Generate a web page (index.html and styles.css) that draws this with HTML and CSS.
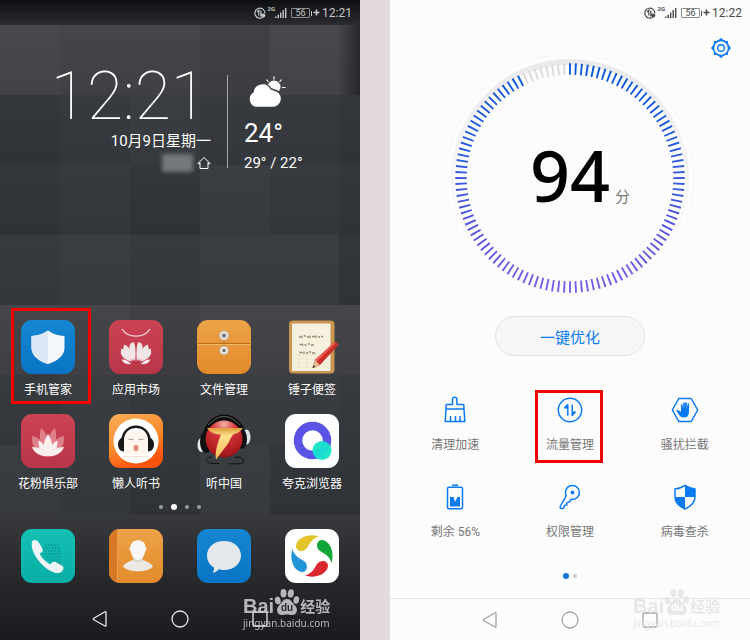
FILE: index.html
```html
<!DOCTYPE html>
<html lang="zh-CN">
<head>
<meta charset="utf-8">
<meta name="viewport" content="width=device-width, initial-scale=1">
<title>手机管家 流量管理</title>
<link rel="stylesheet" href="styles.css">
</head>
<body>
<svg class="defs" aria-hidden="true">
  <defs>
    <linearGradient id="blue" x2="0" y2="1"><stop offset="0" stop-color="#1687d3"/><stop offset="1" stop-color="#0774c4"/></linearGradient>
    <linearGradient id="red" x2="0" y2="1"><stop offset="0" stop-color="#cb4455"/><stop offset="1" stop-color="#b93548"/></linearGradient>
    <linearGradient id="amber" x2="0" y2="1"><stop offset="0" stop-color="#eda247"/><stop offset="1" stop-color="#e28b2b"/></linearGradient>
    <linearGradient id="teal" x2="0" y2="1"><stop offset="0" stop-color="#14bfb4"/><stop offset="1" stop-color="#08aea5"/></linearGradient>
    <linearGradient id="fire" x2="0.4" y2="1"><stop offset="0" stop-color="#f8b05c"/><stop offset="0.6" stop-color="#fb8a2c"/><stop offset="1" stop-color="#f9540a"/></linearGradient>
    <linearGradient id="gold" x2="0" y2="1"><stop offset="0" stop-color="#e09a3a"/><stop offset="0.25" stop-color="#ffdf8c"/><stop offset="1" stop-color="#f5bd55"/></linearGradient>
    <radialGradient id="ball" cx="0.5" cy="0.1" r="0.9"><stop offset="0" stop-color="#f4b0a8"/><stop offset="0.35" stop-color="#d8363a"/><stop offset="1" stop-color="#9c1218"/></radialGradient>
    <linearGradient id="ticks" gradientUnits="userSpaceOnUse" x1="0" y1="8" x2="0" y2="250"><stop offset="0" stop-color="#0557d6"/><stop offset="0.4" stop-color="#2c5cdd"/><stop offset="0.7" stop-color="#5454dd"/><stop offset="1" stop-color="#7d63e6"/></linearGradient>
    <linearGradient id="halo" x2="0" y2="1"><stop offset="0" stop-color="#e9e9eb"/><stop offset="0.35" stop-color="#f3f3f6"/><stop offset="0.8" stop-color="#fbfbfc"/></linearGradient>
    <linearGradient id="rows" x2="0" y2="1"><stop offset="0" stop-color="#373a3e"/><stop offset="1" stop-color="#33363a"/></linearGradient>
    <linearGradient id="rowtop" x2="0" y2="1"><stop offset="0" stop-color="#44464a"/><stop offset="1" stop-color="#3e4044"/></linearGradient>
    <linearGradient id="bar" x2="0" y2="1"><stop offset="0" stop-color="#0e0f11"/><stop offset="0.6" stop-color="#1f2124"/><stop offset="1" stop-color="#2b2d31"/></linearGradient>
    <linearGradient id="dockshade" x2="0" y2="1"><stop offset="0" stop-color="#37393d"/><stop offset="0.35" stop-color="#2b2d31"/><stop offset="1" stop-color="#191b1e"/></linearGradient>
    <linearGradient id="edge"><stop offset="0" stop-color="#26282b" stop-opacity="0"/><stop offset="1" stop-color="#26282b"/></linearGradient>
  </defs>
  <symbol id="data" viewBox="0 0 12 12"><g fill="none" stroke="currentColor" stroke-width="1.2"><path d="M9 10.1A5 5 0 1 1 10.9 6.4"/><path d="M3.2 5 4.8 3.300V8.600M6.800 3.400V8.500L8.400 7"/></g><circle cx="9.300" cy="8.600" r="2" fill="currentColor"/></symbol>
  <symbol id="signal" viewBox="0 0 12 13"><path fill="currentColor" d="M0 10.500h1.500V12H0zM2.500 8.700H4V12H2.500zM5 6.500h1.400V12H5zM7.500 4h1.400v8H7.500zM10 2h1.400v10H10z"/></symbol>
  <symbol id="plus" viewBox="0 0 7 7"><path fill="currentColor" d="M2.700.5h1.600v2.200h2.200v1.600H4.300v2.200H2.700V4.300H.5V2.700h2.200z"/></symbol>
  <symbol id="back" viewBox="0 0 16 18"><path d="M14 2.500V15.500Q14 16.600 13 16L1.800 9.700Q.8 9 1.800 8.300L13 1.800Q14 1.300 14 2.500Z" fill="none" stroke="currentColor" stroke-width="1.300"/></symbol>
  <symbol id="home" viewBox="0 0 18 18"><circle cx="9" cy="9" r="8" fill="none" stroke="currentColor" stroke-width="1.300"/></symbol>
  <symbol id="recent" viewBox="0 0 16 16"><rect x="1" y="1" width="14" height="14" rx="1.500" fill="none" stroke="currentColor" stroke-width="1.300"/></symbol>
  <symbol id="paw" viewBox="0 0 26 29"><g fill="currentColor"><ellipse cx="3.800" cy="12.500" rx="2.900" ry="3.800" transform="rotate(-12 3.800 12.500)"/><ellipse cx="9.500" cy="5.200" rx="3" ry="4.200"/><ellipse cx="16.800" cy="5.400" rx="3" ry="4.200" transform="rotate(10 16.800 5.400)"/><ellipse cx="22.300" cy="12" rx="2.800" ry="3.800" transform="rotate(12 22.300 12)"/><path d="M13 11c4 0 5 3.500 8 6.500 3.500 3.600 2 9.500-2.700 9.500-2.300 0-3.300-.6-5.300-.6s-3 .6-5.300.6C3 27 1.500 21.100 5 17.500 8 14.500 9 11 13 11z"/></g></symbol>
</svg>

<main class="board">
  <section class="phone launcher" aria-label="桌面">
    <svg class="wallpaper" viewBox="0 0 360 640" preserveAspectRatio="none" aria-hidden="true">
      <rect width="360" height="26" fill="url(#bar)"/>
      <rect y="25" width="360" height="70" fill="url(#rowtop)"/>
      <rect y="95" width="360" height="70" fill="url(#rows)"/>
      <rect y="165" width="360" height="70" fill="url(#rows)"/>
      <rect y="235" width="360" height="71" fill="url(#rows)"/>
      <rect y="305" width="360" height="71" fill="url(#rowtop)"/>
      <rect y="375" width="360" height="71" fill="url(#rows)"/>
      <rect y="445" width="360" height="71" fill="url(#rows)"/>
      <rect y="515" width="360" height="125" fill="url(#dockshade)"/>
      <g fill="#fff" opacity=".02"><path d="M0 25h60v70H0zM130 95h70v70h-70zM200 165h70v70h-70zM200 235h70v70h-70zM270 235h69v70h-69zM60 235h70v70H60zM60 375h70v70H60zM200 375h70v140h-70zM0 445h60v70H0zM270 375h69v70h-69zM270 25h69v70h-69z"/></g>
      <g fill="#000" opacity=".06"><path d="M0 95h60v70H0zM130 165h70v70h-70zM200 25h70v70h-70zM0 165h60v70H0zM270 445h90v70h-90zM130 305h70v70h-70zM339 95h21v210h-21zM130 445h70v70h-70z"/></g>
      <rect x="339" y="25" width="21" height="70" fill="url(#edge)"/>
    </svg>

    <header class="status">
      <svg width="12" height="12"><use href="#data"/></svg>
      <span class="net">2G</span>
      <svg width="12" height="13"><use href="#signal"/></svg>
      <span class="battery">56</span>
      <svg class="plus" width="7" height="7"><use href="#plus"/></svg>
      <time>12:21</time>
    </header>

    <div class="widget">
      <div class="when">
        <time class="clock">12:21</time>
        <div class="date">10月9日星期一</div>
        <div class="place"><span class="masked"></span>
          <svg width="14" height="14" viewBox="0 0 14 14"><path d="M3 6.500V12.500H11V6.500M.8 7.600 7 1.500l6.200 6.100H11M3 7.600H.8" fill="none" stroke="#fff"/></svg>
        </div>
      </div>
      <div class="weather">
        <svg width="42" height="34" viewBox="0 0 42 34">
          <circle cx="30" cy="12" r="6.500" fill="#fff"/>
          <path d="M30 1.500v3M22.500 4.500l2 2.500M37.500 4.500l-2 2.500M38 12.500h3.500" stroke="#fff" stroke-width="1.200"/>
          <path d="M12 32.500a8.500 8.500 0 0 1-3-15.500 9.500 9.500 0 0 1 18-3 6 6 0 0 1 3 1 8.800 8.800 0 0 1-1 17.500z" fill="#fff" stroke="#3b3d41" stroke-width="1.400"/>
        </svg>
        <strong>24°</strong>
        <span>29° / 22°</span>
      </div>
    </div>

    <nav class="apps" aria-label="应用">
      <a class="app marked" href="#"><svg viewBox="0 0 54 54"><rect width="54" height="54" rx="11" fill="url(#blue)"/><path d="M27 10.500c5 3.500 10 5 16.500 5.500v12c0 8-8 13.500-16.500 16-8.500-2.500-16.500-8-16.500-16V16C17 15.500 22 14 27 10.500z" fill="#f4f8fc"/><path d="M27 10.500c-5 3.500-10 5-16.500 5.500v12c0 8 8 13.500 16.500 16z" fill="#dbe8f5"/></svg><span>手机管家</span></a>
      <a class="app" href="#"><svg viewBox="0 0 54 54"><rect width="54" height="54" rx="11" fill="url(#red)"/><path d="M13 9c6 9.500 22 9.500 28 0" fill="none" stroke="#f5d9dc" stroke-width="1.300"/><g fill="#f3e6e6"><path d="M26.300 41C20 33 17.500 24 24.500 22c2.500 3 2.200 13 1.800 19z"/><path d="M25 41c-8-4-13-11-9.500-16.500 5 2 8.500 9.500 9.500 16.500z"/><path d="M23 41.500c-9-1.500-13-7.500-10.500-13C17.500 30 21 35 23 41.500z"/><path d="M22 44c-4 1-8-.5-9.500-4.500 4-.5 7.500 1.500 9.500 4.500z"/><path d="M27.700 41C34 33 36.500 24 29.500 22c-2.500 3-2.200 13-1.800 19z"/><path d="M29 41c8-4 13-11 9.500-16.500-5 2-8.500 9.500-9.500 16.500z"/><path d="M31 41.500c9-1.500 13-7.500 10.500-13C36.500 30 33 35 31 41.500z"/><path d="M32 44c4 1 8-.5 9.500-4.500-4-.5-7.500 1.500-9.500 4.500z"/></g></svg><span>应用市场</span></a>
      <a class="app" href="#"><svg viewBox="0 0 54 54"><rect width="54" height="54" rx="11" fill="url(#amber)"/><path d="M1 23.500h52" stroke="#b96d1b"/><path d="M1 24.500h52" stroke="#f3b568"/><path d="M27 17v13" stroke="#b77d3a"/><g fill="#e8e4de" stroke="#b99c78" stroke-width=".7"><circle cx="27" cy="15.500" r="4.800"/><circle cx="27" cy="30.500" r="4.500"/></g><g fill="#6d7176"><circle cx="27" cy="15.500" r="1.900"/><circle cx="27" cy="30.500" r="1.700"/></g></svg><span>文件管理</span></a>
      <a class="app" href="#"><svg viewBox="0 0 54 54"><rect x="4" y=".5" width="45.500" height="53" rx="4" fill="#c9954f"/><path d="M7 3.500h38.500V51H7z" fill="#f6f0df"/><path d="M8 35h37M8 39h37M8 43h37M8 47h37M14 30v20M22 30v20M31 30v20" stroke="#e6dcc3" stroke-width=".6"/><path d="M14 17h2M17 15.500v2.500M19 16h2M22 17h2M25 15.500v2.500M27 16.500h3M31 15.500v2.500M33 17h2M36 16.500h2M14.500 24.500h2M17.500 23.500v2.500M19.500 25h2M23 24h2M26 25h3M14.500 32.500h3M19 31.500V34M21 33h2M24 32h2M27 33h3" stroke="#96866f" stroke-width="1.300"/><path d="m27.500 48 2.500-8L49 22.500q3-1.500 4.500 2.500L35 45z" fill="#c92f2b"/><path d="M30 40 49 22.500l2 .5L32 41.500z" fill="#ed5a50"/><path d="m27.500 48 2.500-8 5 5z" fill="#e5bd88"/><path d="m27.500 48 .9-3 2 2z" fill="#333"/></svg><span>锤子便签</span></a>
      <a class="app" href="#"><svg viewBox="0 0 54 54"><rect width="54" height="54" rx="11" fill="url(#red)"/><g fill="#df7d88"><path d="M27 43c-7-6-10-18-7-29 6 4 9 15 7 29zM27 43c7-6 10-18 7-29-6 4-9 15-7 29zM27 43C17 42 10 33 11 22c9 1 15 10 16 21zM27 43c10-1 17-10 16-21-9 1-15 10-16 21z"/></g><g fill="#fbeeee"><path d="M27 20c5 7 6 15 0 22-6-7-5-15 0-22z"/><path d="M27 42c-7-2-10-8-9.500-15.500C23 29 26.500 35 27 42zM27 42c7-2 10-8 9.500-15.500C31 29 27.500 35 27 42z"/><path d="M27 42c-7 1-14-3-16-9 7 0 13 3 16 9zM27 42c7 1 14-3 16-9-7 0-13 3-16 9z"/></g></svg><span>花粉俱乐部</span></a>
      <a class="app" href="#"><svg viewBox="0 0 54 54"><rect width="54" height="54" rx="11" fill="url(#fire)"/><circle cx="27" cy="27" r="22.500" fill="#fff"/><path d="M15 41V27c0-15 24-15 24 0v14z" fill="#fdf6ee"/><path d="M13.500 27c0-19 27-19 27 0" fill="none" stroke="#171717" stroke-width="2.500"/><path d="M15 23.500v14c-8 0-8-14 0-14zM39 23.500v14c8 0 8-14 0-14z" fill="#171717"/><path d="M19.500 25q2.500 1.500 5 0M29.500 25q2.500 1.500 5 0" stroke="#8b7060" stroke-width=".8" fill="none"/><ellipse cx="27" cy="34" rx="2.500" ry="3.300" fill="#e98c79"/><path d="M14 42.500h26" stroke="#f4d8c2" stroke-width=".7"/></svg><span>懒人听书</span></a>
      <a class="app" href="#"><svg viewBox="0 0 54 54"><path d="M9 20C15-2 39-2 46 20" fill="none" stroke="#0b0b0c" stroke-width="6"/><path d="M11 11Q27-6 43 11" fill="none" stroke="#777b80" stroke-width=".8"/><ellipse cx="4.500" cy="31" rx="4" ry="7" fill="#e5e8ec"/><ellipse cx="49.500" cy="23" rx="4" ry="7.500" fill="#dfe4ea"/><ellipse cx="9" cy="28" rx="6" ry="11" fill="#111"/><ellipse cx="45" cy="25" rx="5" ry="10" fill="#111"/><circle cx="27" cy="25" r="18.500" fill="url(#ball)"/><path d="M10 14H46Q42 19.500 37 20C34 22 33 27 30 31L19 45.500C17.500 38 21 28 24 20.500 18 20.500 13 18.500 10 14z" fill="url(#gold)"/><path d="M15 43c-7 0-8 5 0 6.500h7M38 44c4-3 9 1 9 4-4 3-9 1-15 2" fill="none" stroke="#0b0b0c" stroke-width=".9"/></svg><span>听中国</span></a>
      <a class="app" href="#"><svg viewBox="0 0 54 54"><rect width="54" height="54" rx="11" fill="#fff"/><circle cx="27.500" cy="26.500" r="14.500" fill="none" stroke="#5a53e6" stroke-width="8.500"/><circle cx="37" cy="36.500" r="9.500" fill="#1de5c8"/><path d="M27.500 36.700A10.200 10.200 0 0 0 37.700 27q4 1 6.500 3.500-1 9-8.500 13.500-7-1-8.200-7.300z" fill="#19cfd5" opacity=".5"/></svg><span>夸克浏览器</span></a>
    </nav>
    <div class="pages"><i></i><i class="on"></i><i></i><i></i></div>
    <nav class="dock" aria-label="快捷栏">
      <a href="#" aria-label="电话"><svg viewBox="0 0 54 54"><rect width="54" height="54" rx="11" fill="url(#teal)"/><path d="M24 16h14M22 19h18M24 22h16M24 25h16M26 28h14M28 31h12M32 34h8" stroke="#078f89" stroke-width="1.300" stroke-dasharray="1.300 1.700"/><path d="M12 11.500c3-1.500 5 .5 6.500 3l3 5.500c1 2-.5 3.500-3 4.500 2.500 5 6.500 8.500 11 11 1-2 3-3.500 5-2.500l6.500 3.500c3 2 1 6.500-3 7.500C27 45.500 10 26.500 10.700 15c.1-1.700.3-2.900 1.300-3.500z" fill="#f1f4f4"/></svg></a>
      <a href="#" aria-label="联系人"><svg viewBox="0 0 54 54"><rect width="54" height="54" rx="11" fill="url(#amber)"/><path d="M9 0h2a11 11 0 0 0-11 11v32a11 11 0 0 0 9 10.800z" fill="#d97824"/><path d="M8.500 1v52" stroke="#f2b668" stroke-width=".7"/><path d="M14 37.500c2-4 8-5.500 11-7h8c3 1.500 9 3 11 7-6 6.500-24 6.500-30 0z" fill="#ece9e4"/><path d="M24.500 28h9v4q-4.500 3-9 0z" fill="#ddd7ce"/><path d="M21.500 18c0-9 15-9 15 0 1.500.5 1 4-.5 4.500-.5 5-3.500 8.500-7 8.500s-6.500-3.500-7-8.500c-1.500-.5-2-4-.5-4.500z" fill="#f7f6f4"/></svg></a>
      <a href="#" aria-label="信息"><svg viewBox="0 0 54 54"><rect width="54" height="54" rx="11" fill="url(#blue)"/><path d="M27 12c9.500 0 17 6 17 14.500S36.500 41 27 41c-2 0-3.500-.2-5-.7-2 2-4 3.300-6.500 3.700 1.200-1.500 1.700-3.500 1.500-5.500-4.500-2.500-7-7-7-12C10 18 17.500 12 27 12z" fill="#e4e8eb"/></svg></a>
      <a href="#" aria-label="浏览器"><svg viewBox="0 0 54 54"><rect width="54" height="54" rx="11" fill="#fff"/><path d="M34 7.500C24 4 11.500 9 11 17c0 6 8 6.500 11 2 3-5 5-9.500 12-11.500z" fill="#e2c428"/><path d="M34 7.500C24 4 11.500 9 11 17c0 6 8 6.500 11 2 3-5 5-9.500 12-11.500z" fill="#14a538" transform="rotate(90 27 27)"/><path d="M34 7.500C24 4 11.500 9 11 17c0 6 8 6.500 11 2 3-5 5-9.500 12-11.500z" fill="#d9292e" transform="rotate(180 27 27)"/><path d="M34 7.500C24 4 11.500 9 11 17c0 6 8 6.500 11 2 3-5 5-9.500 12-11.500z" fill="#2494d8" transform="rotate(270 27 27)"/></svg></a>
    </nav>
    <nav class="keys" aria-label="导航键">
      <button type="button" aria-label="返回"><svg width="16" height="18"><use href="#back"/></svg></button>
      <button type="button" aria-label="主页"><svg width="18" height="18"><use href="#home"/></svg></button>
      <button type="button" aria-label="最近"><svg width="16" height="16"><use href="#recent"/></svg></button>
    </nav>
    <div class="brand"><div class="brand-top"><b>Bai</b><span class="paw"><svg width="26" height="29"><use href="#paw"/></svg><i>du</i></span><b class="cn">经验</b></div><div class="site">jingyan.baidu.com</div></div>
  </section>

  <section class="phone manager" aria-label="手机管家">
    <header class="status">
      <svg width="12" height="12"><use href="#data"/></svg>
      <span class="net">2G</span>
      <svg width="12" height="13"><use href="#signal"/></svg>
      <span class="battery">56</span>
      <svg class="plus" width="7" height="7"><use href="#plus"/></svg>
      <time>12:22</time>
    </header>
    <div class="toolbar"><button type="button" aria-label="设置"><svg width="22" height="22" viewBox="0 0 22 22"><g fill="none" stroke="#0a7af0"><circle cx="11" cy="11" r="7.600" stroke-width="1.600"/><circle cx="11" cy="11" r="3.300" stroke-width="1.400"/></g><path d="M9.500 3 11 1.300 12.500 3zM9.500 19l1.500 1.700 1.500-1.700zM3 9.500 1.300 11 3 12.500zM19 9.500l1.700 1.500-1.700 1.500zM4.600 6.100l-.3-1.800 1.800.3zM17.400 6.100l.3-1.800-1.800.3zM4.600 15.900l-.3 1.800 1.800-.3zM17.400 15.900l.3 1.800-1.800-.3z" fill="#0a7af0" stroke="#0a7af0" stroke-linejoin="round"/></svg></button></div>
    <div class="dial">
      <svg viewBox="0 0 256 256" aria-hidden="true">
        <circle cx="128" cy="128" r="124" fill="#fdfdfd" stroke="#f8f8f9"/>
        <circle cx="128" cy="128" r="119" fill="url(#halo)"/>
        <circle cx="128" cy="131" r="116" fill="#fcfcfd"/>
        <path d="M127.050 19A109 109 0 1 1 82.790 28.820" pathLength="112" fill="none" stroke="url(#ticks)" stroke-width="11.500" stroke-dasharray=".33 .67"/>
        <path d="M82.790 28.820A109 109 0 0 1 127.050 19" pathLength="8" fill="none" stroke="#d8d8d9" stroke-width="11.500" stroke-dasharray=".3 .7"/>
      </svg>
      <div class="score"><strong>94</strong><span>分</span></div>
    </div>
    <button class="optimize" type="button">一键优化</button>
    <nav class="tools" aria-label="工具">
      <a class="tool" href="#"><svg viewBox="0 0 28 28"><path d="M5 13V9.500q0-1 1-1h5.500V3.500a2.200 2.200 0 0 1 4.400 0v5h6q1 0 1 1V13zM5 13 4.200 25.500h19.600L23 13M9.500 25.500V20M14.500 25.500V20M19 25.500V20"/></svg><span>清理加速</span></a>
      <a class="tool marked" href="#"><svg viewBox="0 0 28 28"><circle cx="14" cy="14" r="11.700"/><path d="M8.300 12.300 11.800 8.500V19.800M16.200 8.500V19.500L19.500 15.700"/><path class="solid" d="m8.300 12.500 3.500-4v4zM16 15.500h3.700l-3.700 4z"/></svg><span>流量管理</span></a>
      <a class="tool" href="#"><svg viewBox="0 0 28 28"><path d="M7.800 2.500h12.400L26.700 14l-6.500 11.500H7.800L1.300 14z"/><path class="solid" d="M9.900 8.500q.9-.8 1.500.2l.8 4.300V7q.8-1.200 1.700 0v5.500l.3-6q.8-1 1.600 0v6.300l.8-5q.8-1 1.500.2l-.2 9c-.5 3-2 4.500-5 4.500s-4-1.500-5.500-3.500l-2-3c0-1.500 1.700-1.500 3.700.5l1-.3z"/></svg><span>骚扰拦截</span></a>
      <a class="tool" href="#"><svg viewBox="0 0 28 28"><rect x="6.500" y="4.200" width="15" height="21.500" rx="1.500"/><path d="M11 2.200h6"/><path class="solid" d="M9 14h3.500l1.500 5 2.500-5H19v9.500H9z"/></svg><span>剩余 56%</span></a>
      <a class="tool" href="#"><svg viewBox="0 0 28 28"><path d="M10.200 12.700A7 7 0 1 1 16 16.500L14.800 16.300l-1 2.500-2.800.8-.3 2.300-2.200.5-.8 2.300q-.8 1-2.200.8-1.800-.2-1.300-2z"/><circle class="solid" cx="16.500" cy="9.500" r="2"/></svg><span>权限管理</span></a>
      <a class="tool" href="#"><svg viewBox="0 0 28 28"><path d="M14 2.500q5 3 10 3.500v8c0 6-4.500 9.500-10 12-5.500-2.500-10-6-10-12V6q5-.5 10-3.500z"/><path class="solid" d="M14 2.500q5 3 10 3.500v8H14zM14 14v12C8.500 23.500 4 20 4 14z"/></svg><span>病毒查杀</span></a>
    </nav>
    <div class="pages"><i class="on"></i><i></i></div>
    <nav class="keys" aria-label="导航键">
      <button type="button" aria-label="返回"><svg width="16" height="18"><use href="#back"/></svg></button>
      <button type="button" aria-label="主页"><svg width="18" height="18"><use href="#home"/></svg></button>
      <button type="button" aria-label="最近"><svg width="16" height="16"><use href="#recent"/></svg></button>
    </nav>
    <div class="brand"><div class="brand-top"><b>Bai</b><span class="paw"><svg width="26" height="29"><use href="#paw"/></svg><i>du</i></span><b class="cn">经验</b></div><div class="site">jingyan.baidu.com</div></div>
  </section>
</main>
</body>
</html>
```
FILE: styles.css
```css
* { box-sizing: border-box; }

body {
  margin: 0;
  background: #e2dadb;
  font-family: Roboto, "Noto Sans CJK SC", sans-serif;
}

a { color: inherit; text-decoration: none; }
button { border: 0; padding: 0; background: none; color: inherit; font: inherit; }
svg { display: block; flex: none; }
.defs { position: absolute; width: 0; height: 0; }

.board {
  display: grid;
  grid-template-columns: 1fr 1fr;
  gap: 30px;
  min-height: 100vh;
}

.phone {
  position: relative;
  display: flex;
  flex-direction: column;
  min-width: 0;
}
.launcher { color: #fff; background: #303338; isolation: isolate; }
.manager { color: #777; background: #fcfcfd; }

.wallpaper {
  position: absolute;
  inset: 0;
  z-index: -1;
  width: 100%;
  height: 100%;
}

/* Status bar */
.status {
  display: flex;
  align-items: center;
  justify-content: flex-end;
  height: 25px;
  padding-right: 8px;
  font-size: 12px;
  color: #c4c6c8;
}
.manager .status { color: #4a4a4a; }
.net { margin-left: 2px; font-size: 6px; font-weight: 700; line-height: 18px; align-self: flex-start; }
.battery {
  position: relative;
  width: 19px;
  height: 10px;
  margin: 0 3px 0 4px;
  border: 1px solid #8b8d90;
  border-radius: 1px;
  font-size: 9px;
  line-height: 8px;
  text-align: center;
}
.battery::after {
  content: "";
  position: absolute;
  top: 2px;
  right: -3px;
  width: 1px;
  height: 5px;
  background: currentColor;
}
.plus { margin-right: 2px; }

/* Clock and weather */
.widget {
  display: grid;
  grid-template-columns: 211fr 149fr;
  padding-top: 40px;
}
.when { display: flex; flex-direction: column; align-items: flex-end; }
.clock {
  padding-right: 4px;
  font-size: 66px;
  font-weight: 100;
  line-height: 64px;
}
.date { font-size: 15px; line-height: 24px; white-space: nowrap; }
.place { display: flex; align-items: center; gap: 4px; height: 20px; }
.masked { width: 31px; height: 18px; background: #75787c; filter: blur(2px); }
.weather {
  display: flex;
  flex-direction: column;
  align-self: start;
  margin: 10px 0 0 16px;
  padding-left: 16px;
  height: 93px;
  border-left: 1px solid #a3a5a8;
}
.weather strong { font-size: 26px; font-weight: 400; line-height: 48px; }
.weather span { font-size: 15px; line-height: 12px; }

/* Launcher icons */
.apps {
  display: grid;
  grid-template-columns: repeat(4, 1fr);
  margin-top: auto;
  padding: 0 4px;
}
.app {
  position: relative;
  display: flex;
  flex-direction: column;
  align-items: center;
  gap: 7px;
  height: 94px;
  padding-top: 12px;
  font-size: 12px;
  line-height: 18px;
  white-space: nowrap;
}
.app svg, .dock svg { width: 54px; height: 54px; overflow: visible; }
.app.marked::after, .tool.marked::after {
  content: "";
  position: absolute;
  border: 3px solid #f50000;
}
.app.marked::after { inset: 0 1px -2px 7px; }

.pages {
  display: flex;
  align-items: center;
  justify-content: center;
  gap: 8px;
  height: 22px;
}
.pages i { width: 4px; height: 4px; border-radius: 50%; background: #9a9c9f; }
.pages .on { width: 6px; height: 6px; background: #fff; }

.dock {
  display: grid;
  grid-template-columns: repeat(4, 1fr);
  justify-items: center;
  height: 80px;
  padding: 11px 4px 0;
}

.keys {
  display: flex;
  justify-content: center;
  height: 42px;
}
.keys button { display: grid; place-items: center; width: 80px; color: #e8e8e9; }
.manager .keys { border-top: 1px solid #e6e6e7; }
.manager .keys button { color: #a3a3a4; }

/* Security manager */
.toolbar { display: flex; justify-content: flex-end; height: 46px; padding-right: 18px; }
.dial { position: relative; width: 256px; margin: -21px auto 0; }
.dial svg { width: 100%; }
.score {
  position: absolute;
  inset: 0;
  display: flex;
  align-items: baseline;
  justify-content: center;
  gap: 5px;
  padding: 76px 0 0 20px;
  line-height: 98px;
}
.score strong { font-family: "Noto Sans", sans-serif; font-size: 70px; font-weight: 500; color: #000; }
.score span { font-size: 15px; }

.optimize {
  width: 150px;
  height: 40px;
  margin: 10px auto 0;
  border: 1px solid #e2e2e3;
  border-radius: 20px;
  background: #f6f6f7;
  color: #0a7af0;
  font-size: 15px;
}

.tools {
  display: grid;
  grid-template-columns: repeat(3, 1fr);
  margin-top: auto;
  padding: 0 8px;
}
.tool {
  position: relative;
  display: flex;
  flex-direction: column;
  align-items: center;
  gap: 12px;
  height: 87px;
  padding-top: 6px;
  font-size: 12px;
  line-height: 18px;
}
.tool svg { width: 28px; height: 28px; fill: none; stroke: #0a7af0; stroke-width: 1.5; stroke-linejoin: round; }
.tool .solid { fill: #0a7af0; stroke-width: 0; }
.tool.marked::after { inset: 0 24px 14px 22px; }

.manager .pages { gap: 4px; height: 34px; padding: 0 0 10px; }
.manager .pages i { background: #c9c5c5; }
.manager .pages .on { background: #1273dc; }

/* Watermark */
.brand { position: absolute; right: 28px; bottom: 11px; width: 89px; color: #d0d1d3; opacity: .85; }
.brand-top { display: flex; align-items: flex-end; height: 29px; }
.brand b { font: 700 20px/22px "Liberation Sans", sans-serif; }
.brand .cn { font: 700 15px/22px "Noto Sans CJK SC", sans-serif; }
.paw { position: relative; }
.paw i {
  position: absolute;
  inset: 14px 0 auto;
  font: 700 10px/12px "Liberation Sans", sans-serif;
  text-align: center;
  color: #292b2f;
}
.site { font: 10px/12px "Noto Sans", sans-serif; }
.manager .brand { color: #e4e4e5; }
.manager .paw i { color: #fff; }
```
